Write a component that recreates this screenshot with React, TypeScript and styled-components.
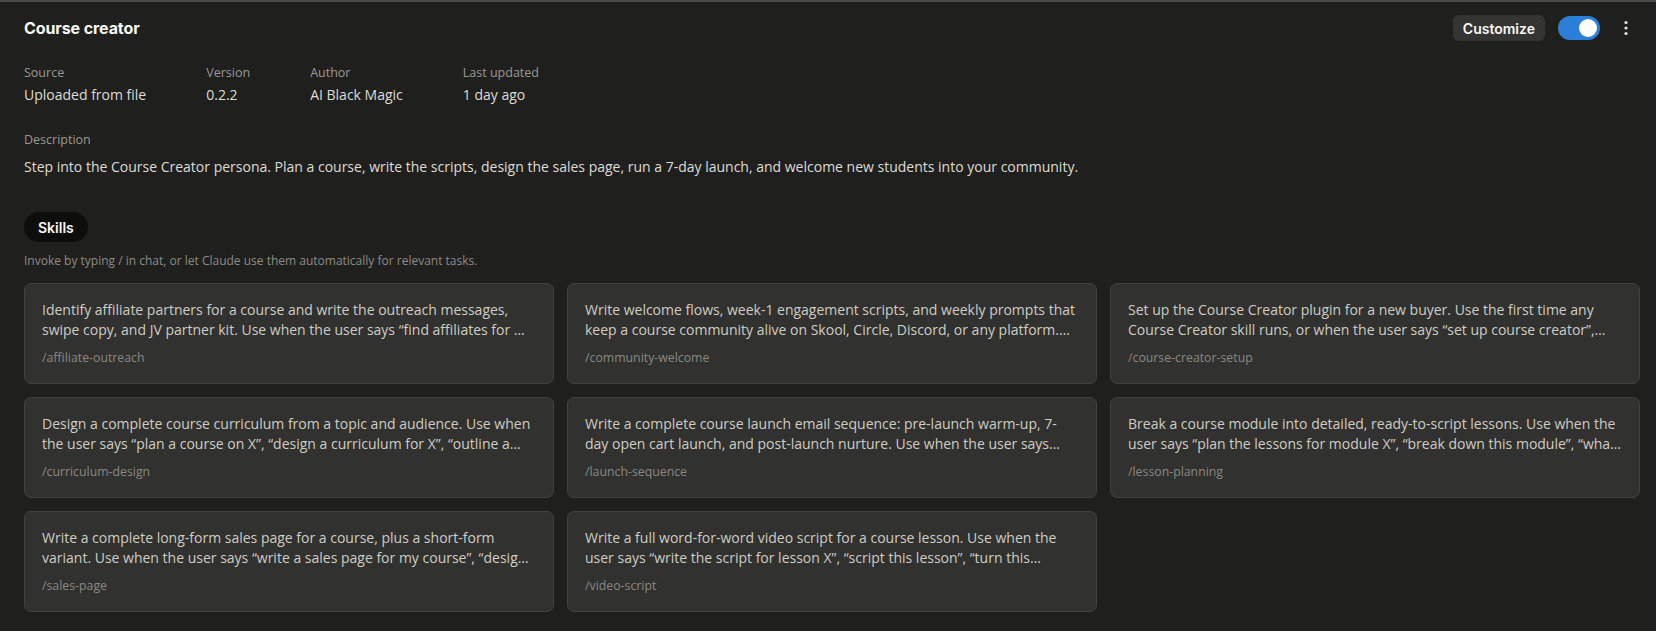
import React from 'react';
import styled, { createGlobalStyle } from 'styled-components';

type Skill = {
  command: string;
  description: string;
};

const skills: Skill[] = [
  {
    command: '/affiliate-outreach',
    description:
      'Identify affiliate partners for a course and write the outreach messages, swipe copy, and JV partner kit. Use when the user says “find affiliates for my course”, “write affiliate outreach”.',
  },
  {
    command: '/community-welcome',
    description:
      'Write welcome flows, week-1 engagement scripts, and weekly prompts that keep a course community alive on Skool, Circle, Discord, or any platform. Use when the user says “welcome new students”.',
  },
  {
    command: '/course-creator-setup',
    description:
      'Set up the Course Creator plugin for a new buyer. Use the first time any Course Creator skill runs, or when the user says “set up course creator”, “configure my brand”.',
  },
  {
    command: '/curriculum-design',
    description:
      'Design a complete course curriculum from a topic and audience. Use when the user says “plan a course on X”, “design a curriculum for X”, “outline a course”.',
  },
  {
    command: '/launch-sequence',
    description:
      'Write a complete course launch email sequence: pre-launch warm-up, 7-day open cart launch, and post-launch nurture. Use when the user says “write my launch emails”.',
  },
  {
    command: '/lesson-planning',
    description:
      'Break a course module into detailed, ready-to-script lessons. Use when the user says “plan the lessons for module X”, “break down this module”, “what lessons go in this module”.',
  },
  {
    command: '/sales-page',
    description:
      'Write a complete long-form sales page for a course, plus a short-form variant. Use when the user says “write a sales page for my course”, “design my sales page”.',
  },
  {
    command: '/video-script',
    description:
      'Write a full word-for-word video script for a course lesson. Use when the user says “write the script for lesson X”, “script this lesson”, “turn this outline into a script”.',
  },
];

const meta = [
  { label: 'Source', value: 'Uploaded from file' },
  { label: 'Version', value: '0.2.2' },
  { label: 'Author', value: 'AI Black Magic' },
  { label: 'Last updated', value: '1 day ago' },
];

const GlobalStyle = createGlobalStyle`
  html, body {
    margin: 0;
    padding: 0;
    background: #1f1f1e;
  }
  body {
    font-family: "Open Sans", "Noto Sans", "Liberation Sans", sans-serif;
    -webkit-font-smoothing: antialiased;
  }
  * {
    box-sizing: border-box;
  }
`;

const App: React.FC = () => {
  return (
    <>
      <GlobalStyle />
      <Page>
        <Header>
          <Title>Course creator</Title>
          <Actions>
            <CustomizeButton>Customize</CustomizeButton>
            <Toggle aria-label="Enabled" $on>
              <Knob $on />
            </Toggle>
            <MenuButton aria-label="More">
              <svg width="4" height="16" viewBox="0 0 4 16" fill="#e8e6df">
                <circle cx="2" cy="2.5" r="1.6" />
                <circle cx="2" cy="8" r="1.6" />
                <circle cx="2" cy="13.5" r="1.6" />
              </svg>
            </MenuButton>
          </Actions>
        </Header>

        <MetaRow>
          {meta.map((m) => (
            <MetaItem key={m.label}>
              <Label>{m.label}</Label>
              <Value>{m.value}</Value>
            </MetaItem>
          ))}
        </MetaRow>

        <Section>
          <Label>Description</Label>
          <Description>
            Step into the Course Creator persona. Plan a course, write the scripts, design the sales page,
            run a 7-day launch, and welcome new students into your community.
          </Description>
        </Section>

        <TabPill>Skills</TabPill>
        <Hint>Invoke by typing / in chat, or let Claude use them automatically for relevant tasks.</Hint>

        <SkillGrid>
          {skills.map((s) => (
            <SkillCard key={s.command}>
              <SkillText>{s.description}</SkillText>
              <SkillCommand>{s.command}</SkillCommand>
            </SkillCard>
          ))}
        </SkillGrid>
      </Page>
    </>
  );
};

const Page = styled.div`
  min-height: 631px;
  border-top: 2px solid #4a4a48;
  padding: 13px 16px 20px 24px;
  display: flex;
  flex-direction: column;
`;

const Header = styled.div`
  display: flex;
  align-items: center;
  justify-content: space-between;
  height: 26px;
`;

const Title = styled.h1`
  margin: 0;
  font-family: Inter, "Open Sans", sans-serif;
  font-size: 16px;
  font-weight: 700;
  color: #faf9f5;
  letter-spacing: -0.1px;
`;

const Actions = styled.div`
  display: flex;
  align-items: center;
  gap: 13px;
  margin-right: 6px;
`;

const CustomizeButton = styled.button`
  height: 26px;
  padding: 0 10px;
  border: none;
  border-radius: 6px;
  background: #343432;
  color: #faf9f5;
  font-family: Inter, "Open Sans", sans-serif;
  font-size: 14px;
  font-weight: 600;
  cursor: pointer;
`;

const Toggle = styled.button<{ $on?: boolean }>`
  position: relative;
  width: 42px;
  height: 24px;
  padding: 0;
  border: none;
  border-radius: 12px;
  background: ${({ $on }) => ($on ? '#2c7fd8' : '#4a4a47')};
  cursor: pointer;
`;

const Knob = styled.span<{ $on?: boolean }>`
  position: absolute;
  top: 3px;
  left: ${({ $on }) => ($on ? '21px' : '3px')};
  width: 18px;
  height: 18px;
  border-radius: 50%;
  background: #ffffff;
`;

const MenuButton = styled.button`
  display: flex;
  align-items: center;
  justify-content: center;
  width: 16px;
  height: 24px;
  margin-left: 5px;
  padding: 0;
  border: none;
  background: transparent;
  cursor: pointer;
`;

const MetaRow = styled.div`
  display: flex;
  gap: 60px;
  margin-top: 23px;
`;

const MetaItem = styled.div`
  display: flex;
  flex-direction: column;
  gap: 3px;
`;

const Label = styled.div`
  font-size: 12.5px;
  line-height: 18px;
  color: #9a9892;
`;

const Value = styled.div`
  font-size: 14px;
  line-height: 20px;
  color: #dedcd4;
`;

const Section = styled.div`
  display: flex;
  flex-direction: column;
  gap: 8px;
  margin-top: 26px;
`;

const Description = styled.p`
  margin: 0;
  font-size: 14px;
  line-height: 20px;
  color: #dedcd4;
`;

const TabPill = styled.div`
  align-self: flex-start;
  margin-top: 35px;
  height: 30px;
  padding: 0 14px;
  display: flex;
  align-items: center;
  border-radius: 15px;
  background: #0d0d0c;
  color: #faf9f5;
  font-family: Inter, "Open Sans", sans-serif;
  font-size: 14px;
  font-weight: 600;
`;

const Hint = styled.div`
  margin-top: 11px;
  font-size: 12px;
  line-height: 16px;
  color: #8d8b85;
`;

const SkillGrid = styled.div`
  display: grid;
  grid-template-columns: repeat(3, 1fr);
  gap: 13px;
  margin-top: 14px;
`;

const SkillCard = styled.div`
  display: flex;
  flex-direction: column;
  gap: 9px;
  padding: 16px 17px;
  border: 1px solid #41413d;
  border-radius: 7px;
  background: #31312f;
`;

const SkillText = styled.div`
  font-size: 14px;
  line-height: 20px;
  color: #cfcdc4;
  display: -webkit-box;
  -webkit-line-clamp: 2;
  -webkit-box-orient: vertical;
  overflow: hidden;
`;

const SkillCommand = styled.div`
  font-size: 12.3px;
  line-height: 18px;
  color: #8a8882;
`;

export default App;
